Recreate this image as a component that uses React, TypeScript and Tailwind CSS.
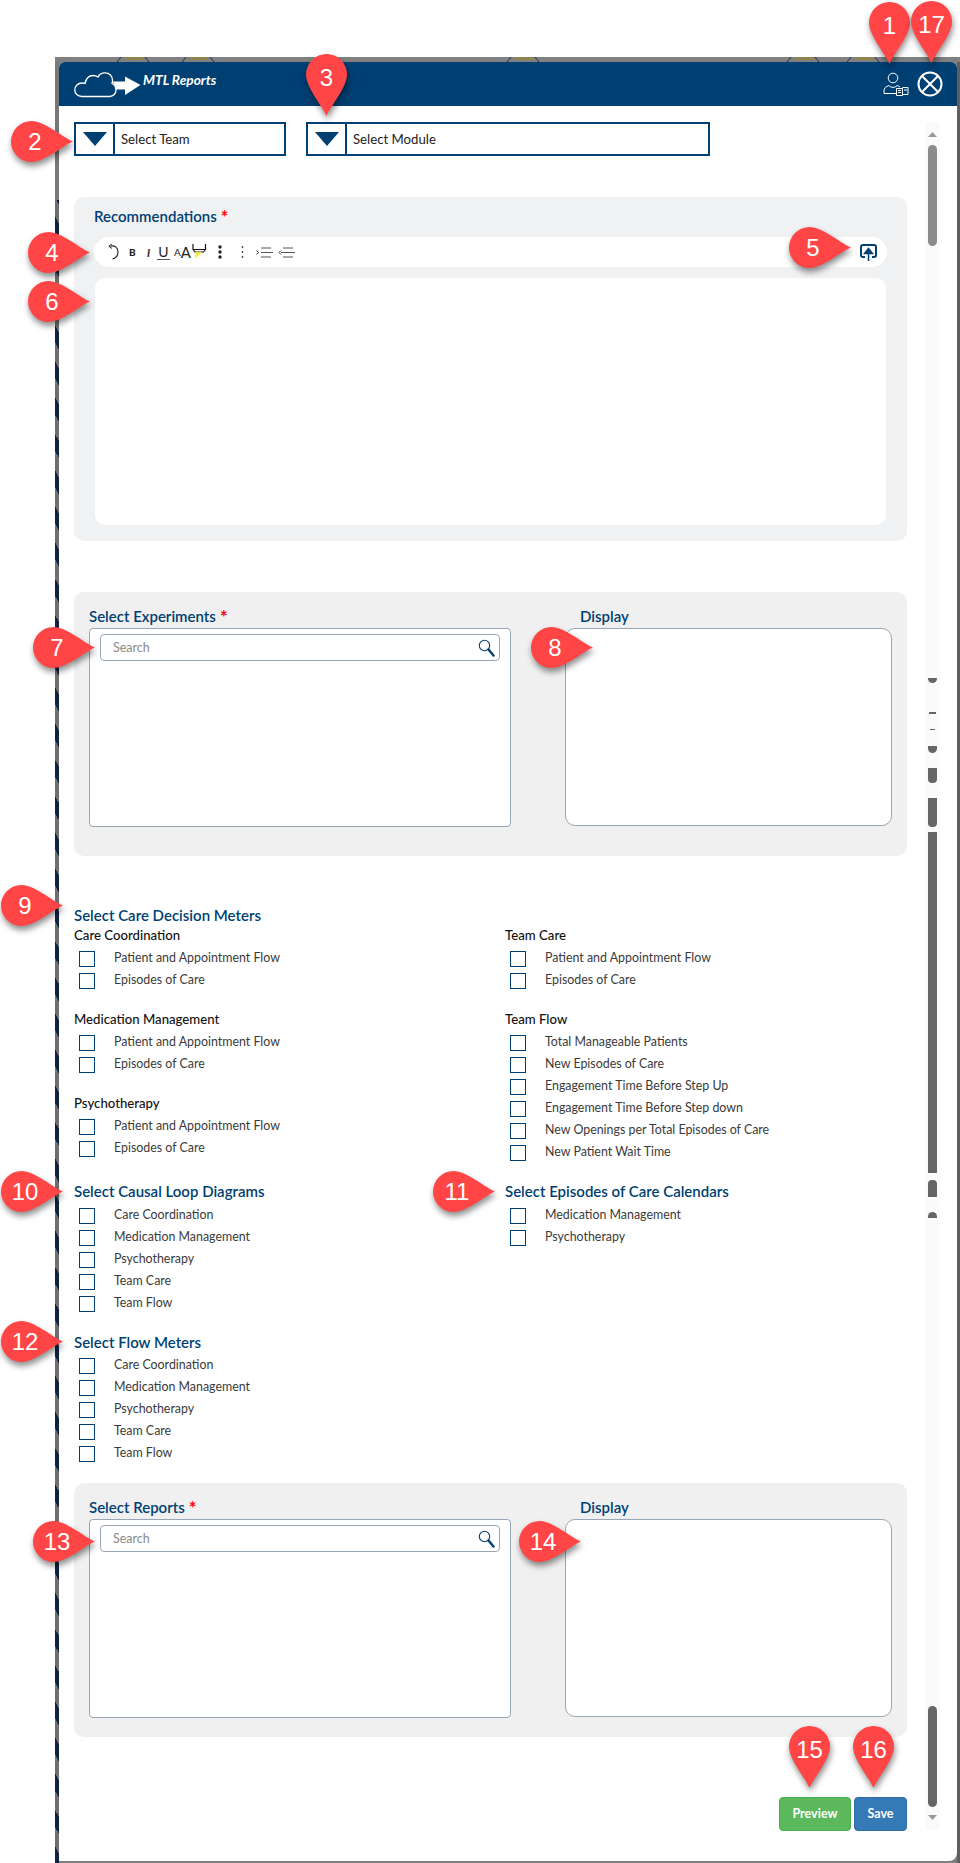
import React from "react";

const NAVY = "#003f72";

function Check({ label }: { label: string }) {
  return (
    <div className="flex h-[22px] items-start">
      <span className="mt-[3px] ml-[5px] h-4 w-4 shrink-0 border-[1.5px] border-[#003f72] bg-white" />
      <span className="ml-[19px] text-[12.4px] leading-[20px] text-[#3a3a3a]">{label}</span>
    </div>
  );
}

function SectionTitle({ children }: { children: React.ReactNode }) {
  return <div className="h-5 text-[15px] leading-5 font-semibold text-[#003f72]">{children}</div>;
}

function GroupLabel({ children, className }: { children: React.ReactNode; className?: string }) {
  return <div className={"h-[23px] text-[13.2px] leading-5 font-medium text-[#111111] " + (className ?? "")}>{children}</div>;
}

function Checks({ items }: { items: string[] }) {
  return (
    <div>
      {items.map((t) => (
        <Check key={t} label={t} />
      ))}
    </div>
  );
}

function Star() {
  return <span className="ml-[4px] align-[-2px] text-[18px] leading-none font-bold text-[#ff0000]">*</span>;
}

function Dropdown({ label, className }: { label: string; className: string }) {
  return (
    <div className={"flex h-[34px] border-2 border-[#003f72] bg-white " + className}>
      <div className="flex w-[39px] items-center justify-center border-r-2 border-[#003f72]">
        <svg width="24" height="14" viewBox="0 0 24 14">
          <path d="M0 0H24L12 14Z" fill={NAVY} />
        </svg>
      </div>
      <div className="flex items-center pt-[1px] pl-[6px] text-[13.2px] text-[#222222]">{label}</div>
    </div>
  );
}

function Magnifier() {
  return (
    <svg width="17" height="18" viewBox="0 0 17 18" className="shrink-0">
      <circle cx="6.5" cy="6.5" r="5.2" fill="none" stroke={NAVY} strokeWidth="1.1" />
      <path d="M10.5 10.5L15.5 16.5" stroke={NAVY} strokeWidth="2.4" strokeLinecap="round" />
    </svg>
  );
}

function Picker({ title, panelClass }: { title: string; panelClass: string }) {
  return (
    <section className={"w-[833px] rounded-[10px] bg-[#f0f0f0] pt-[14px] pl-[15px] " + panelClass}>
      <div className="flex">
        <div className="w-[476px]">
          <div className="h-[22px] text-[15px] leading-5 font-semibold text-[#003f72]">
            {title}
            <Star />
          </div>
          <div className="h-[199px] w-[422px] rounded-[4px] border border-[#98a6b8] bg-white px-[10px] pt-[5px]">
            <div className="flex h-[27px] w-[400px] items-center rounded-[4px] border border-[#98a6b8] pr-[4px] pl-[12px]">
              <input
                readOnly
                placeholder="Search"
                className="min-w-0 flex-1 bg-transparent pt-[2px] text-[12.5px] outline-none placeholder:text-[#8a8a8a]"
              />
              <Magnifier />
            </div>
          </div>
        </div>
        <div>
          <div className="h-[22px] pl-[15px] text-[15px] leading-5 font-semibold text-[#003f72]">Display</div>
          <div className="h-[198px] w-[327px] rounded-[10px] border border-[#98a6b8] bg-white" />
        </div>
      </div>
    </section>
  );
}

function Toolbar() {
  return (
    <div className="mt-[11px] ml-5 flex h-[30px] w-[793px] items-center rounded-[15px] bg-white pr-[10px] pl-[14px] text-[#222222]">
      <svg width="11" height="16" viewBox="0 0 11 16" className="mr-[10px]">
        <path d="M2.5 2.2C7 1 10 4 10 8C10 11.5 8 14 4.5 15" fill="none" stroke="#222" strokeWidth="1.1" />
        <path d="M4 0L0.8 2.2L4 4.5" fill="none" stroke="#222" strokeWidth="1" />
      </svg>
      <span className="w-[12px] text-[10px] leading-none font-black">B</span>
      <span className="ml-[6px] w-[9px] text-[11px] leading-none font-bold italic">I</span>
      <span className="ml-[1px] w-[13px] border-b border-[#555] text-center text-[14px] leading-[14px] font-normal">U</span>
      <span className="ml-[4px] text-[10px] leading-none">A</span>
      <span className="text-[15px] leading-none">A</span>
      <svg width="15" height="16" viewBox="0 0 15 16" className="ml-[1px]">
        <path d="M1 0V5.5H13.5V0M1 5.5L3 8H11.5L13.5 5.5" fill="none" stroke="#111" strokeWidth="1.2" />
        <path d="M3.5 8H10L3.5 14.5Z" fill="#f5ea3a" />
      </svg>
      <svg width="6" height="14" viewBox="0 0 6 14" className="ml-[10px]">
        <circle cx="3" cy="2" r="1.7" fill="#222" />
        <circle cx="3" cy="7" r="1.7" fill="#222" />
        <circle cx="3" cy="12" r="1.7" fill="#222" />
      </svg>
      <svg width="3" height="14" viewBox="0 0 3 14" className="ml-[18px]">
        <path d="M1.5 1V3M1.5 6V8M1.5 11V13" stroke="#444" strokeWidth="1.3" />
      </svg>
      <svg width="17" height="11" viewBox="0 0 17 11" className="ml-[12px]">
        <path d="M5 1H15M5 5.5H17M5 10H15" stroke="#555" strokeWidth="1.2" />
        <path d="M0.5 3.5L2.5 5.5L0.5 7.5" fill="none" stroke="#222" strokeWidth="0.9" />
      </svg>
      <svg width="17" height="11" viewBox="0 0 17 11" className="ml-[5px]">
        <path d="M5 1H15M3 5.5H17M5 10H15" stroke="#555" strokeWidth="1.2" />
        <path d="M3 3.5L1 5.5L3 7.5" fill="none" stroke="#222" strokeWidth="0.9" />
      </svg>
      <svg width="17" height="17" viewBox="0 0 17 17" className="ml-auto">
        <path
          d="M5 13H3C1.8 13 1 12.2 1 11V3C1 1.8 1.8 1 3 1H14C15.2 1 16 1.8 16 3V11C16 12.2 15.2 13 14 13H12"
          fill="none"
          stroke={NAVY}
          strokeWidth="2"
        />
        <path d="M8.5 17V7M4.5 9.5L8.5 4.5L12.5 9.5Z" fill={NAVY} stroke={NAVY} strokeWidth="1.5" />
      </svg>
    </div>
  );
}

function Logo() {
  return (
    <svg width="67" height="26" viewBox="0 0 67 26" className="shrink-0">
      <path
        d="M8 24.5C3.5 24.5 0.8 21.5 0.8 18C0.8 14 4 11 8 11C9 11 10 11.1 11 11.5C12 7 15 3.5 19 3.5C21 3.5 22.5 4 24 5C25 2.5 28 0.8 31 0.8C35.5 0.8 38.5 4 38.5 8.5C38.5 9.5 38.5 10.5 38 11.5C40.5 12.5 42 15 42 18C42 21.5 39.5 24.5 35.5 24.5Z"
        fill="#003f72"
        stroke="#fff"
        strokeWidth="1.3"
      />
      <path d="M39 9.5H51V4.5L66.5 13L51 23V17.5H41.5Z" fill="#fff" />
    </svg>
  );
}

function UserBookIcon() {
  return (
    <svg width="26" height="25" viewBox="0 0 26 25" className="shrink-0">
      <circle cx="10" cy="6" r="4.8" fill="none" stroke="#fff" strokeWidth="1" />
      <path d="M1 21.5V19C1 16 3 14.5 6 13.5C8 16 12 16 14 13.5C15 13.8 16 14.3 17 15M1 21.5H13" fill="none" stroke="#fff" strokeWidth="1" />
      <path d="M13.5 16.5H19.5V23.5H13.5ZM19.5 15.5H25V22.5H19.5" fill="#003f72" stroke="#fff" strokeWidth="1" />
      <path d="M15 18.5H18M15 20.5H18M21 18H24" stroke="#fff" strokeWidth="1" />
    </svg>
  );
}

function CloseIcon() {
  return (
    <svg width="26" height="26" viewBox="0 0 26 26" className="-mt-[2px] shrink-0">
      <circle cx="13" cy="13" r="11.5" fill="none" stroke="#fff" strokeWidth="2" />
      <path d="M5 5L21 21M21 5L5 21" stroke="#fff" strokeWidth="2" />
    </svg>
  );
}

function Pin({ n, pos, side }: { n: string; pos: string; side: "down" | "right" }) {
  return (
    <div className={"absolute flex h-[41px] w-[41px] items-center justify-center " + pos + (side === "down" ? " pt-[7px]" : " pl-[7px]")}>
      <svg
        width="41"
        height="41"
        viewBox="-20.5 -20.5 41 41"
        className="absolute inset-0 overflow-visible drop-shadow-[1px_4px_3px_rgba(0,0,0,0.45)]"
      >
        <path
          d="M0 41.5C-5 30 -20.5 13 -20.5 0A20.5 20.5 0 1 1 20.5 0C20.5 13 5 30 0 41.5Z"
          fill="#ff4545"
          transform={side === "right" ? "rotate(-90)" : undefined}
        />
      </svg>
      <span className="relative font-['Liberation_Sans',sans-serif] text-[24px] leading-none text-white">{n}</span>
    </div>
  );
}

const pins: { n: string; pos: string; side: "down" | "right" }[] = [
  { n: "1", pos: "left-[869px] top-[2px]", side: "down" },
  { n: "17", pos: "left-[911px] top-[1px]", side: "down" },
  { n: "3", pos: "left-[306px] top-[54px]", side: "down" },
  { n: "2", pos: "left-[11px] top-[121px]", side: "right" },
  { n: "4", pos: "left-[28px] top-[232px]", side: "right" },
  { n: "5", pos: "left-[789px] top-[227px]", side: "right" },
  { n: "6", pos: "left-[28px] top-[281px]", side: "right" },
  { n: "7", pos: "left-[33px] top-[627px]", side: "right" },
  { n: "8", pos: "left-[531px] top-[627px]", side: "right" },
  { n: "9", pos: "left-[1px] top-[885px]", side: "right" },
  { n: "10", pos: "left-[1px] top-[1171px]", side: "right" },
  { n: "11", pos: "left-[433px] top-[1171px]", side: "right" },
  { n: "12", pos: "left-[1px] top-[1321px]", side: "right" },
  { n: "13", pos: "left-[33px] top-[1521px]", side: "right" },
  { n: "14", pos: "left-[519px] top-[1521px]", side: "right" },
  { n: "15", pos: "left-[789px] top-[1726px]", side: "down" },
  { n: "16", pos: "left-[853px] top-[1726px]", side: "down" },
];

function TopStrip() {
  return (
    <svg width="905" height="5" viewBox="0 0 905 5" className="block bg-[#808080]">
      {[60, 125, 450, 730, 790].map((x) => (
        <g key={x}>
          <path d={`M${x + 2} 5L${x + 6} 0M${x + 30} 0L${x + 34} 5`} stroke="#1d2f4a" strokeWidth="1" />
          <path d={`M${x + 10} 0H${x + 28}V3H${x + 10}Z`} fill="#8f8450" />
        </g>
      ))}
    </svg>
  );
}

function Scrollbar() {
  return (
    <div className="mt-4 ml-[18px] flex h-[1708px] w-[15px] flex-col items-center bg-[#fafafa]">
      <svg width="9" height="5" viewBox="0 0 9 5" className="mt-[10px] shrink-0">
        <path d="M4.5 0L9 5H0Z" fill="#999" />
      </svg>
      <div className="mt-[8px] h-[101px] w-[9px] shrink-0 rounded-full bg-[#8c8c8c]" />
      <div className="mt-[432px] h-[5px] w-[9px] shrink-0 rounded-b-full bg-[#666666]" />
      <div className="mt-[29px] h-[2px] w-[7px] shrink-0 bg-[#666666]" />
      <div className="mt-[15px] h-[1px] w-[5px] shrink-0 bg-[#666666]" />
      <div className="mt-[16px] h-[7px] w-[9px] shrink-0 rounded-b-full bg-[#666666]" />
      <div className="mt-[15px] h-[15px] w-[9px] shrink-0 rounded-b-[4px] bg-[#666666]" />
      <div className="mt-[15px] h-[29px] w-[9px] shrink-0 rounded-b-[4px] bg-[#666666]" />
      <div className="mt-[5px] h-[341px] w-[9px] shrink-0 bg-[#666666]" />
      <div className="mt-[7px] h-[17px] w-[9px] shrink-0 rounded-t-[4px] bg-[#666666]" />
      <div className="mt-[15px] h-[6px] w-[9px] shrink-0 rounded-t-full bg-[#666666]" />
      <div className="mt-[488px] h-[101px] w-[9px] shrink-0 rounded-full bg-[#666666]" />
      <svg width="9" height="5" viewBox="0 0 9 5" className="mt-[8px] shrink-0">
        <path d="M0 0H9L4.5 5Z" fill="#999" />
      </svg>
    </div>
  );
}

export default function App() {
  return (
    <div className="relative h-[1863px] w-[960px] overflow-hidden bg-white pt-[57px] pl-[55px] font-[Lato,sans-serif]">
      <div className="w-[905px]">
        <TopStrip />
        <div className="flex h-[1801px] bg-[#808080]">
          <div className="w-[4px] shrink-0 flex-col">
            <div className="h-[138px] bg-[#787878]" />
            <div className="h-[1663px] bg-[repeating-linear-gradient(62deg,#0f2442_0px,#0f2442_8px,#6f6f6f_8px,#6f6f6f_17px)]" />
          </div>
          <div className="h-[1799px] w-[898px] shrink-0 overflow-hidden rounded-t-[6px] rounded-br-[8px] bg-white">
            <header className="flex h-[44px] items-center bg-[#003f72] pl-[15px]">
              <div className="mt-[1px]">
                <Logo />
              </div>
              <span className="ml-[2px] -mt-[8px] text-[13.7px] font-bold text-white italic">MTL Reports</span>
              <div className="mt-[1px] mr-[14px] ml-auto flex items-center gap-[8px]">
                <UserBookIcon />
                <CloseIcon />
              </div>
            </header>
            <div className="flex">
              <main className="ml-[15px] w-[833px] shrink-0">
                <div className="mt-4 flex gap-5">
                  <Dropdown label="Select Team" className="w-[212px]" />
                  <Dropdown label="Select Module" className="w-[404px]" />
                </div>

                <section className="mt-[41px] h-[344px] rounded-[10px] bg-[#f0f1f3] pt-[9px]">
                  <div className="h-5 pl-5 text-[15px] leading-5 font-semibold text-[#003f72]">
                    Recommendations
                    <Star />
                  </div>
                  <Toolbar />
                  <div className="mt-[11px] ml-[21px] h-[247px] w-[791px] rounded-[10px] bg-white" />
                </section>

                <div className="mt-[51px]">
                  <Picker title="Select Experiments" panelClass="h-[264px]" />
                </div>

                <div className="mt-[49px] grid grid-cols-[431px_1fr] gap-y-[17px]">
                  <div>
                    <SectionTitle>Select Care Decision Meters</SectionTitle>
                    <GroupLabel>Care Coordination</GroupLabel>
                    <Checks items={["Patient and Appointment Flow", "Episodes of Care"]} />
                    <GroupLabel className="mt-[17px]">Medication Management</GroupLabel>
                    <Checks items={["Patient and Appointment Flow", "Episodes of Care"]} />
                    <GroupLabel className="mt-[17px]">Psychotherapy</GroupLabel>
                    <Checks items={["Patient and Appointment Flow", "Episodes of Care"]} />
                  </div>
                  <div className="pt-5">
                    <GroupLabel>Team Care</GroupLabel>
                    <Checks items={["Patient and Appointment Flow", "Episodes of Care"]} />
                    <GroupLabel className="mt-[17px]">Team Flow</GroupLabel>
                    <Checks
                      items={[
                        "Total Manageable Patients",
                        "New Episodes of Care",
                        "Engagement Time Before Step Up",
                        "Engagement Time Before Step down",
                        "New Openings per Total Episodes of Care",
                        "New Patient Wait Time",
                      ]}
                    />
                  </div>
                  <div>
                    <div className="h-6">
                      <SectionTitle>Select Causal Loop Diagrams</SectionTitle>
                    </div>
                    <Checks items={["Care Coordination", "Medication Management", "Psychotherapy", "Team Care", "Team Flow"]} />
                    <div className="mt-[17px] h-[23px]">
                      <SectionTitle>Select Flow Meters</SectionTitle>
                    </div>
                    <Checks items={["Care Coordination", "Medication Management", "Psychotherapy", "Team Care", "Team Flow"]} />
                  </div>
                  <div>
                    <div className="h-6">
                      <SectionTitle>Select Episodes of Care Calendars</SectionTitle>
                    </div>
                    <Checks items={["Medication Management", "Psychotherapy"]} />
                  </div>
                </div>

                <div className="mt-[18px]">
                  <Picker title="Select Reports" panelClass="h-[254px]" />
                </div>

                <div className="mt-[60px] flex justify-end gap-[3px]">
                  <button className="h-[34px] w-[72px] rounded-[4px] border border-[#4cae4c] bg-[#5cb85c] text-[12.5px] font-bold text-white">
                    Preview
                  </button>
                  <button className="h-[34px] w-[53px] rounded-[4px] border border-[#2e6da4] bg-[#337ab7] text-[12.5px] font-bold text-white">
                    Save
                  </button>
                </div>
              </main>
              <Scrollbar />
            </div>
          </div>
          <div className="w-[3px] shrink-0 bg-[#5f5f5f]" />
        </div>
      </div>
      {pins.map((p) => (
        <Pin key={p.n} n={p.n} pos={p.pos} side={p.side} />
      ))}
    </div>
  );
}
